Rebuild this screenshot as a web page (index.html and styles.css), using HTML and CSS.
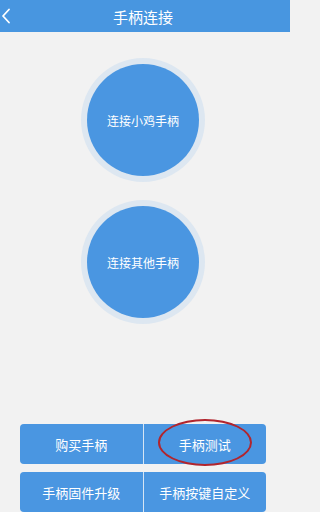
FILE: index.html
```html
<!DOCTYPE html>
<html lang="zh-CN">
<head>
<meta charset="utf-8">
<title>手柄连接</title>
<link rel="stylesheet" href="styles.css">
</head>
<body>
<header class="topbar">
  <svg class="back" width="10" height="16" viewBox="0 0 10 16"><path d="M8 1.5 L2 8 L8 14.5" fill="none" stroke="#ffffff" stroke-width="1.8" stroke-linecap="round" stroke-linejoin="round"/></svg>
  <h1 class="title">手柄连接</h1>
</header>
<main class="content">
  <div class="circles">
    <div class="ring"><div class="disc">连接小鸡手柄</div></div>
    <div class="ring"><div class="disc">连接其他手柄</div></div>
  </div>
  <div class="actions">
    <div class="btn-row">
      <div class="btn">购买手柄</div>
      <div class="btn marked">手柄测试<span class="mark"></span></div>
    </div>
    <div class="btn-row">
      <div class="btn">手柄固件升级</div>
      <div class="btn">手柄按键自定义</div>
    </div>
  </div>
</main>
</body>
</html>
```
FILE: styles.css
```css
* { box-sizing: border-box; }
html, body {
  margin: 0;
  padding: 0;
  background: #f2f2f2;
  font-family: "Noto Sans CJK SC", "Noto Sans", sans-serif;
  width: 290px;
  height: 512px;
  overflow: hidden;
}
.topbar {
  height: 32px;
  background: #4896e0;
  display: flex;
  align-items: center;
  justify-content: center;
  padding-right: 4px;
  position: relative;
}
.back {
  position: absolute;
  left: 1px;
  top: 8px;
}
.title {
  margin: 0;
  font-size: 15px;
  font-weight: normal;
  color: #ffffff;
  line-height: 1;
}
.content {
  display: flex;
  flex-direction: column;
  align-items: center;
  padding-right: 4px;
}
.circles {
  display: flex;
  flex-direction: column;
  align-items: center;
  gap: 18px;
  padding-top: 26px;
}
.ring {
  width: 124px;
  height: 124px;
  border-radius: 50%;
  background: #dde7f1;
  display: flex;
  align-items: center;
  justify-content: center;
}
.disc {
  width: 112px;
  height: 112px;
  border-radius: 50%;
  background: #4a96e1;
  color: #ffffff;
  font-size: 12px;
  display: flex;
  align-items: center;
  justify-content: center;
}
.actions {
  margin-top: 100px;
  display: flex;
  flex-direction: column;
  gap: 8px;
  width: 246px;
}
.btn-row {
  display: grid;
  grid-template-columns: 1fr 1fr;
  gap: 1px;
  background: #d6e5f4;
  border-radius: 4px;
  overflow: hidden;
  height: 40px;
}
.btn {
  background: #4a96e1;
  color: #ffffff;
  font-size: 13px;
  display: flex;
  align-items: center;
  justify-content: center;
}
.marked { position: relative; overflow: visible; }
.mark {
  position: absolute;
  left: 14px;
  top: -5px;
  width: 94px;
  height: 47px;
  border: 2px solid #b1252e;
  border-radius: 50%;
}
.btn-row:first-child { overflow: visible; }
.btn-row:first-child .btn:first-child { border-radius: 4px 0 0 4px; }
.btn-row:first-child .btn:last-child { border-radius: 0 4px 4px 0; }
```
